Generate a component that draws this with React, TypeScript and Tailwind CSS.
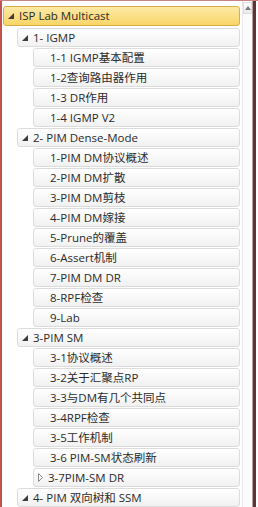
const rows: { level: number; label: string; arrow?: 'open' | 'closed'; selected?: boolean }[] = [
  { level: 0, label: 'ISP Lab Multicast', arrow: 'open', selected: true },
  { level: 1, label: '1- IGMP', arrow: 'open' },
  { level: 2, label: '1-1 IGMP基本配置' },
  { level: 2, label: '1-2查询路由器作用' },
  { level: 2, label: '1-3 DR作用' },
  { level: 2, label: '1-4 IGMP V2' },
  { level: 1, label: '2- PIM Dense-Mode', arrow: 'open' },
  { level: 2, label: '1-PIM DM协议概述' },
  { level: 2, label: '2-PIM DM扩散' },
  { level: 2, label: '3-PIM DM剪枝' },
  { level: 2, label: '4-PIM DM嫁接' },
  { level: 2, label: '5-Prune的覆盖' },
  { level: 2, label: '6-Assert机制' },
  { level: 2, label: '7-PIM DM DR' },
  { level: 2, label: '8-RPF检查' },
  { level: 2, label: '9-Lab' },
  { level: 1, label: '3-PIM SM', arrow: 'open' },
  { level: 2, label: '3-1协议概述' },
  { level: 2, label: '3-2关于汇聚点RP' },
  { level: 2, label: '3-3与DM有几个共同点' },
  { level: 2, label: '3-4RPF检查' },
  { level: 2, label: '3-5工作机制' },
  { level: 2, label: '3-6 PIM-SM状态刷新' },
  { level: 2, label: '3-7PIM-SM DR', arrow: 'closed' },
  { level: 1, label: '4- PIM 双向树和 SSM', arrow: 'open' },
]

const indent = ['ml-0', 'ml-[14px]', 'ml-[30px]']

function Arrow({ kind }: { kind?: 'open' | 'closed' }) {
  if (kind === 'open')
    return (
      <svg width="6" height="6" viewBox="0 0 6 6" className="shrink-0">
        <polygon points="6,0 6,6 0,6" fill="#3c3c3c" />
      </svg>
    )
  if (kind === 'closed')
    return (
      <svg width="5" height="9" viewBox="0 0 5 9" className="shrink-0">
        <polygon points="0.5,0.5 4.5,4.5 0.5,8.5" fill="none" stroke="#8a8a8a" strokeWidth="1" />
      </svg>
    )
  return <span className="w-[6px] shrink-0" />
}

export default function App() {
  return (
    <div
      className="w-[258px] h-[507px] flex bg-white overflow-hidden border-t border-[#c98282]"
      style={{ fontFamily: '"Open Sans", "Noto Sans CJK SC", sans-serif' }}
    >
      {/* 左边框 */}
      <div className="w-[2px] bg-[#c4514c] shrink-0" />

      {/* 树 */}
      <div className="flex-1 pt-[5px] pl-[1px] pr-[2px] flex flex-col gap-[1px]">
        {rows.map((r, i) => (
          <div
            key={i}
            className={`${indent[r.level]} h-[19px] shrink-0 flex items-center gap-[5px] rounded-[3px] border text-[11.5px] leading-none text-[#2a2a2a] ${
              r.selected
                ? 'h-[20px] mb-[1px] pl-[4px] border-[#d9ad4a] bg-gradient-to-b from-[#fdeaa6] to-[#f9d565]'
                : 'pl-[4px] border-[#dcdcdc] bg-gradient-to-b from-white to-[#f1f1f1]'
            } ${r.level === 2 && !r.arrow ? 'pl-[16px]' : ''}`}
          >
            {!(r.level === 2 && !r.arrow) && <Arrow kind={r.arrow} />}
            <span className="whitespace-nowrap">{r.label}</span>
          </div>
        ))}
      </div>

      {/* 滚动条 */}
      <div className="w-[10px] shrink-0 border-l border-[#e8e8e8] bg-[#fbfbfb] flex flex-col">
        <div className="h-[12px] mt-[1px] flex items-center justify-center border border-[#dedede] bg-gradient-to-b from-white to-[#ececec]">
          <svg width="6" height="4" viewBox="0 0 6 4">
            <polygon points="3,0 6,4 0,4" fill="#7a7a7a" />
          </svg>
        </div>
      </div>
      <div className="w-[1px] bg-[#b0a0a0] shrink-0" />
      <div className="w-[3px] bg-[#5e3434] shrink-0" />
      <div className="w-[2px] bg-white shrink-0" />
    </div>
  )
}
